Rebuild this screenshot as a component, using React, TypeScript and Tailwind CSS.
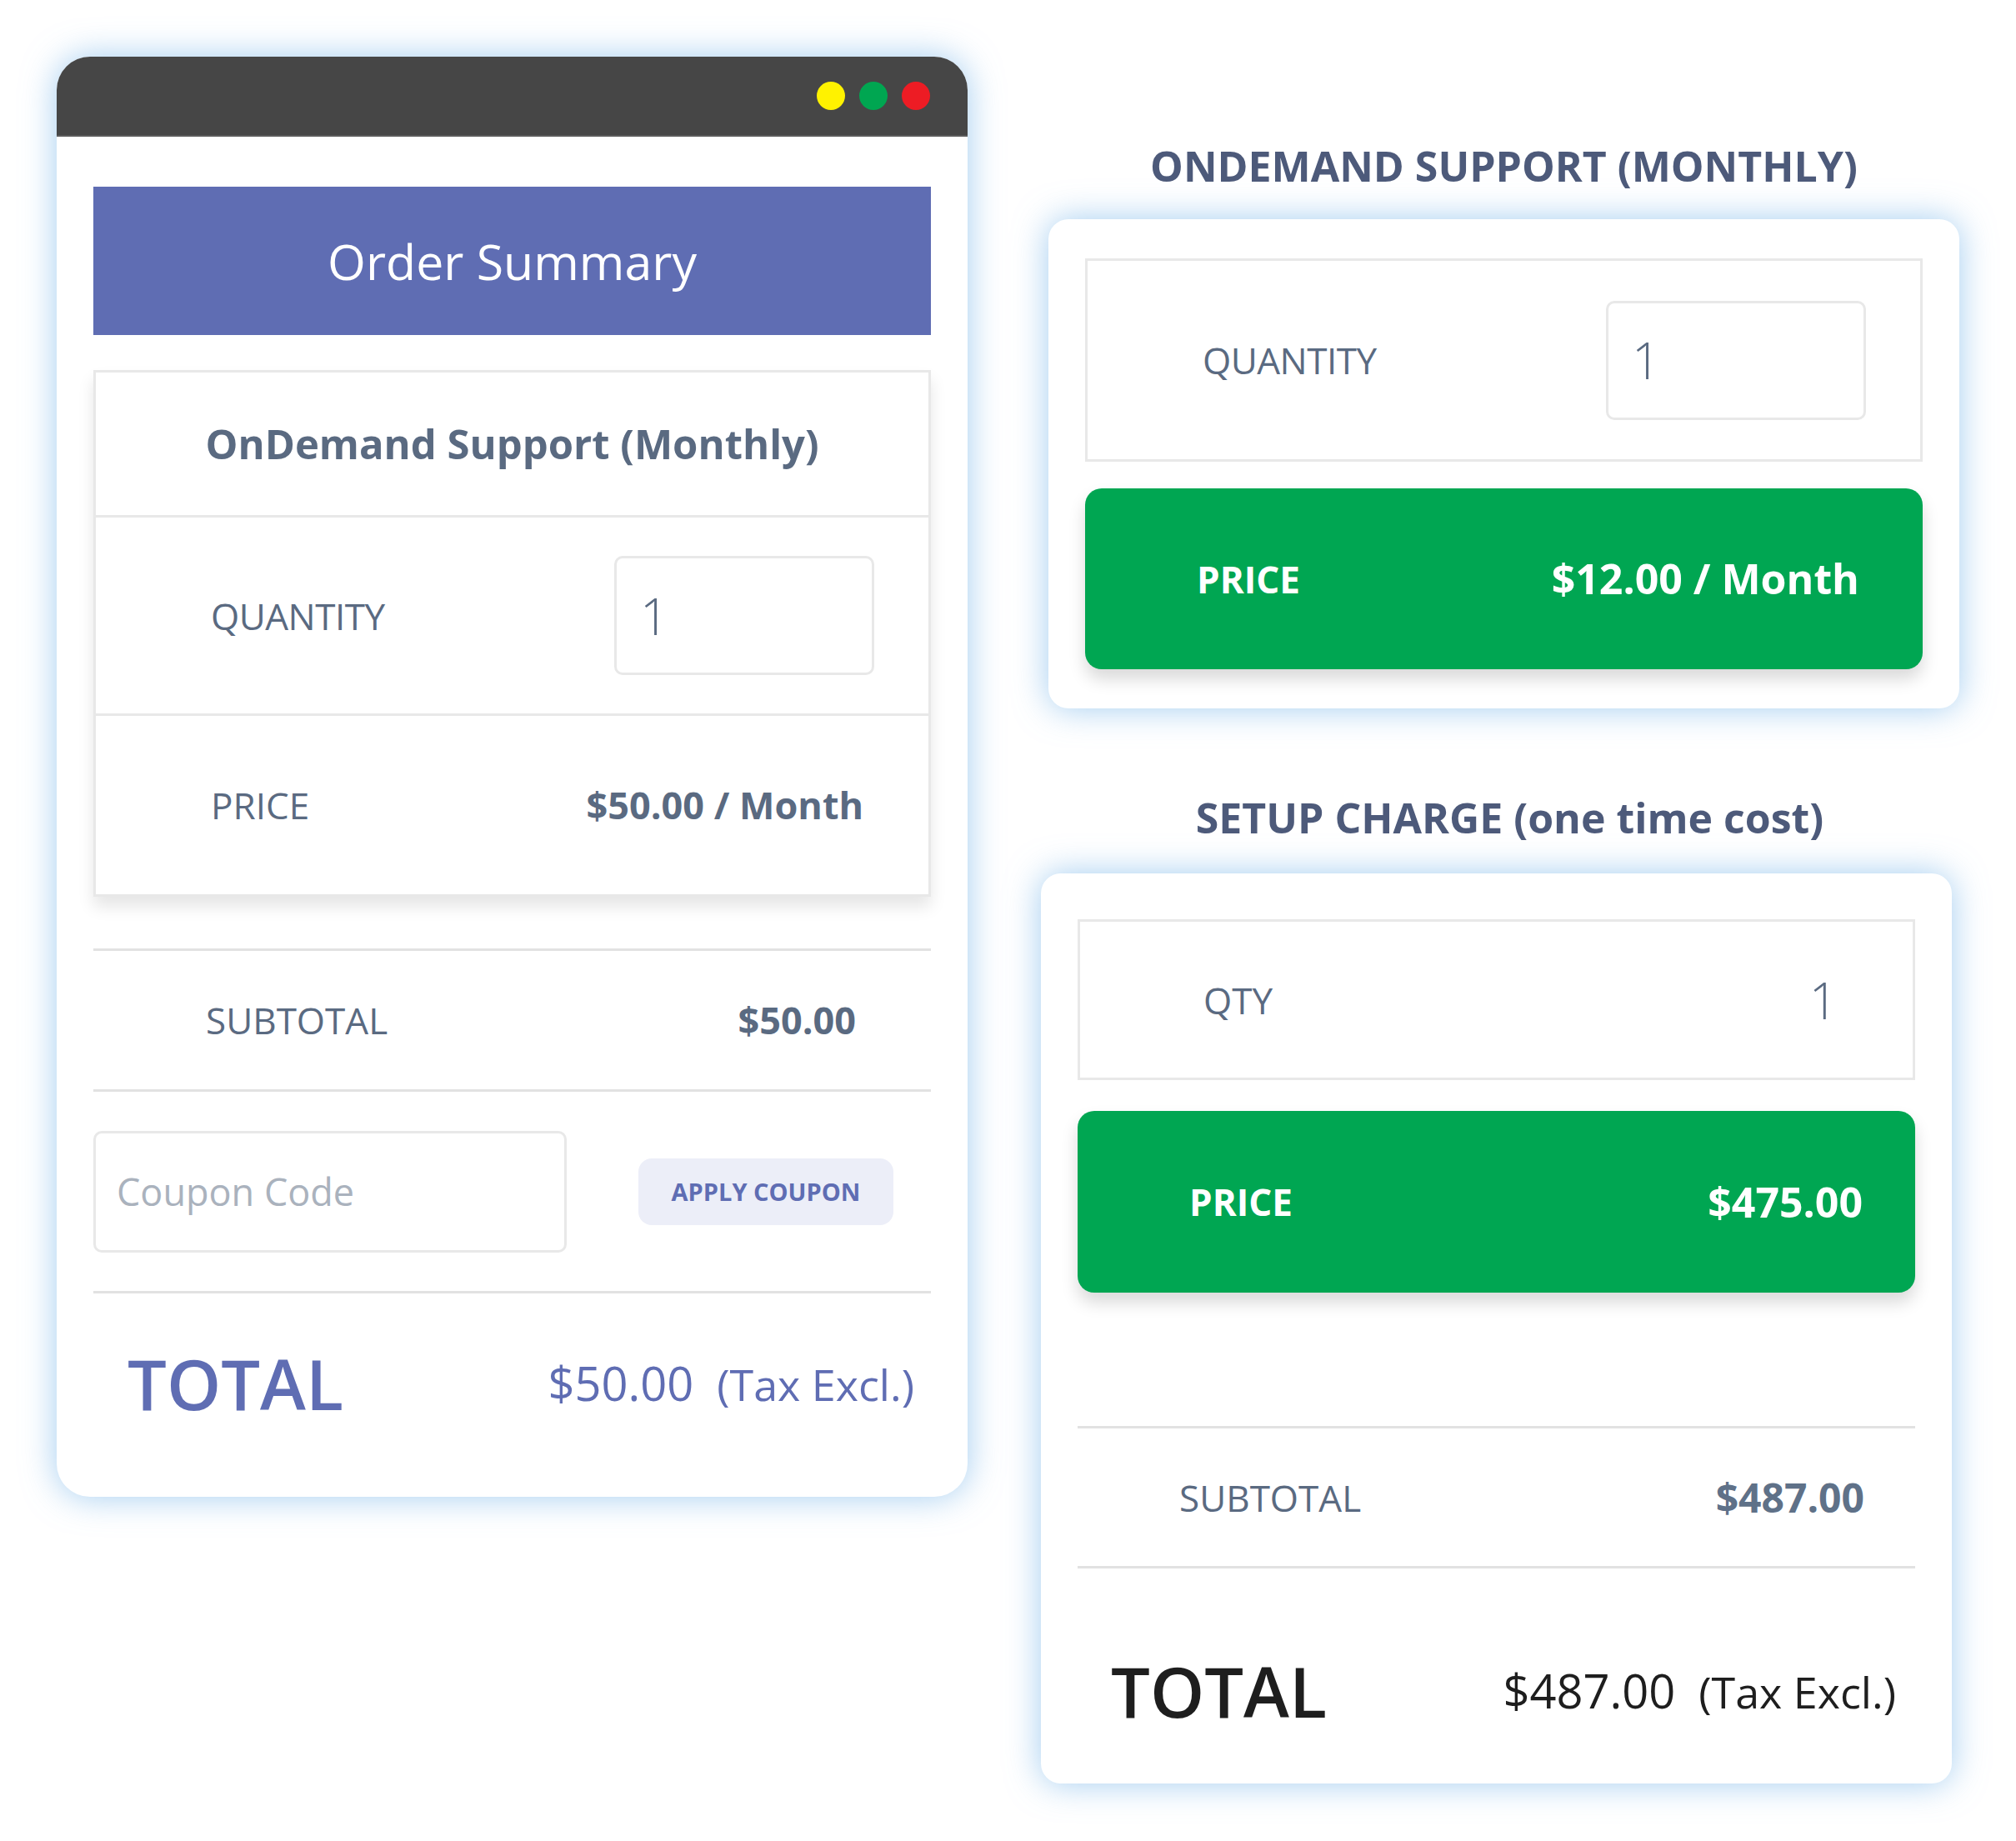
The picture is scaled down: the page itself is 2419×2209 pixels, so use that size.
import React from "react";

const FONT = { fontFamily: '"Open Sans", "Noto Sans", sans-serif' };

function QtyRow({ height }: { height: string }) {
  return (
    <div className={`flex items-center justify-between pl-[138px] pr-[65px] ${height}`}>
      <span className="text-[44px] text-[#5a6a81] tracking-[-0.5px]">QUANTITY</span>
      <div className="w-[312px] h-[143px] rounded-[10px] border-[3px] border-[#e8e8e8] flex items-center pl-[28px]">
        <span className="text-[60px] font-light text-[#5a6a81]">1</span>
      </div>
    </div>
  );
}

function Divider() {
  return <div className="h-[3px] bg-[#e2e2e2]" />;
}

function OrderWindow() {
  return (
    <div className="w-[1093px] h-[1728px] rounded-[40px] bg-white shadow-[0_0_40px_rgba(100,170,230,0.6)] flex flex-col overflow-hidden">
      {/* title bar */}
      <div className="h-[96px] bg-[#464646] flex items-center justify-end pr-[45px] gap-[17px] border-b-[2px] border-[#5a5a5a]">
        <span className="w-[34px] h-[34px] rounded-full bg-[#fff200]" />
        <span className="w-[34px] h-[34px] rounded-full bg-[#00a651]" />
        <span className="w-[34px] h-[34px] rounded-full bg-[#ed1c24]" />
      </div>

      <div className="flex flex-col px-[44px] pt-[60px]">
        <div className="h-[178px] bg-[#5f6db3] flex items-center justify-center">
          <span className="text-[59px] text-white">Order Summary</span>
        </div>

        {/* product box */}
        <div className="mt-[42px] border-[3px] border-[#e8e8e8] shadow-[0_12px_18px_rgba(0,0,0,0.10)] flex flex-col">
          <div className="h-[174px] flex items-center justify-center border-b-[3px] border-[#e8e8e8]">
            <span className="text-[49px] font-bold text-[#5a6a81]">OnDemand Support (Monthly)</span>
          </div>
          <div className="border-b-[3px] border-[#e8e8e8]">
            <QtyRow height="h-[235px]" />
          </div>
          <div className="h-[214px] flex items-center justify-between pl-[138px] pr-[78px]">
            <span className="text-[44px] text-[#5a6a81]">PRICE</span>
            <span className="text-[45px] font-bold text-[#5a6a81]">$50.00 / Month</span>
          </div>
        </div>

        <div className="mt-[62px]">
          <Divider />
        </div>
        <div className="h-[166px] flex items-center justify-between pl-[135px] pr-[90px]">
          <span className="text-[44px] text-[#5a6a81]">SUBTOTAL</span>
          <span className="text-[45px] font-bold text-[#5a6a81]">$50.00</span>
        </div>
        <Divider />

        <div className="h-[239px] flex items-center justify-between pr-[45px]">
          <div className="w-[568px] h-[146px] rounded-[10px] border-[3px] border-[#e8e8e8] flex items-center pl-[25px]">
            <span className="text-[45px] text-[#aab2bd]">Coupon Code</span>
          </div>
          <div className="w-[306px] h-[80px] rounded-[16px] bg-[#eceef8] flex items-center justify-center">
            <span className="text-[29px] font-bold text-[#5f6db3]">APPLY COUPON</span>
          </div>
        </div>
        <Divider />

        <div className="h-[214px] flex items-center justify-between pl-[41px] pr-[20px]">
          <span className="text-[83px] font-semibold text-[#5f6db3] leading-none">TOTAL</span>
          <span className="flex items-baseline gap-[28px] text-[#5f6db3] font-medium">
            <span className="text-[56px]">$50.00</span>
            <span className="text-[52px]">(Tax Excl.)</span>
          </span>
        </div>
      </div>
    </div>
  );
}

function Heading({ children }: { children: React.ReactNode }) {
  return (
    <div className="h-[98px] flex items-center justify-center">
      <span className="text-[50px] font-bold text-[#4d5a7a]">{children}</span>
    </div>
  );
}

function GreenPrice({ value, height, pr }: { value: string; height: string; pr: string }) {
  return (
    <div
      className={`${height} ${pr} rounded-[20px] bg-[#00a652] shadow-[0_12px_20px_rgba(0,0,0,0.15)] flex items-center justify-between pl-[134px]`}
    >
      <span className="text-[44px] font-bold text-white">PRICE</span>
      <span className="text-[50px] font-bold text-white">{value}</span>
    </div>
  );
}

function RightColumn() {
  return (
    <div className="w-[1102px] flex flex-col pt-[150px]">
      <div className="pl-[9px]">
        <Heading>ONDEMAND SUPPORT (MONTHLY)</Heading>
        <div className="mt-[15px] w-[1093px] rounded-[24px] bg-white shadow-[0_0_40px_rgba(100,170,230,0.6)] px-[44px] pt-[47px] pb-[47px] flex flex-col">
          <div className="border-[3px] border-[#e8e8e8]">
            <QtyRow height="h-[238px]" />
          </div>
          <div className="mt-[32px]">
            <GreenPrice value="$12.00 / Month" height="h-[217px]" pr="pr-[76px]" />
          </div>
        </div>
      </div>

      <div className="mt-[82px] pr-[9px]">
        <div className="pl-[32px]">
          <Heading>SETUP CHARGE (one time cost)</Heading>
        </div>
        <div className="mt-[18px] w-[1093px] h-[1092px] rounded-[24px] bg-white shadow-[0_0_40px_rgba(100,170,230,0.6)] px-[44px] pt-[55px] flex flex-col">
          <div className="h-[193px] border-[3px] border-[#e8e8e8] flex items-center justify-between pl-[148px] pr-[90px]">
            <span className="text-[44px] text-[#5a6a81]">QTY</span>
            <span className="text-[60px] font-light text-[#5a6a81]">1</span>
          </div>
          <div className="mt-[37px]">
            <GreenPrice value="$475.00" height="h-[218px]" pr="pr-[63px]" />
          </div>
          <div className="mt-[160px]">
            <Divider />
          </div>
          <div className="h-[165px] flex items-center justify-between pl-[122px] pr-[61px]">
            <span className="text-[44px] text-[#5a6a81]">SUBTOTAL</span>
            <span className="text-[48px] font-bold text-[#5f7188]">$487.00</span>
          </div>
          <Divider />
          <div className="flex-1 flex items-center justify-between pl-[40px] pr-[23px] pt-[34px]">
            <span className="text-[83px] font-semibold text-[#1e1e1e] leading-none">TOTAL</span>
            <span className="flex items-baseline gap-[28px] text-[#1e1e1e] font-medium">
              <span className="text-[56px]">$487.00</span>
              <span className="text-[52px]">(Tax Excl.)</span>
            </span>
          </div>
        </div>
      </div>
    </div>
  );
}

export default function App() {
  return (
    <div className="w-[2419px] h-[2209px] bg-white flex items-start gap-[88px] pl-[68px] pt-[68px]" style={FONT}>
      <OrderWindow />
      <div className="-mt-[68px]">
        <RightColumn />
      </div>
    </div>
  );
}
